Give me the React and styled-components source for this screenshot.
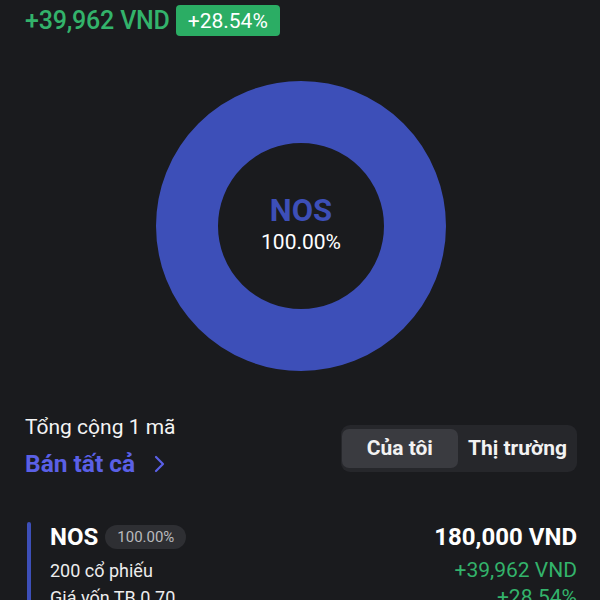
import React from "react";
import styled, { createGlobalStyle } from "styled-components";

const Global = createGlobalStyle`
  html, body { margin: 0; padding: 0; background: #1a1b1e; }
  body { font-family: Roboto, "Noto Sans", Arial, sans-serif; color: #f2f2f2; }
  * { box-sizing: border-box; }
`;

const Page = styled.div`
  width: 600px;
  height: 600px;
  overflow: hidden;
  background: #1a1b1e;
  padding: 5px 23px 0 27px;
  display: flex;
  flex-direction: column;
`;

const Header = styled.div`
  display: flex;
  align-items: center;
  gap: 6px;
  height: 31px;
  margin-left: -2px;
`;

const Gain = styled.span`
  font-size: 25px;
  font-weight: 500;
  color: #33b36b;
  letter-spacing: -0.2px;
`;

const GainBadge = styled.span`
  background: #2bad64;
  color: #fff;
  font-size: 21px;
  height: 31px;
  padding: 0 12px;
  border-radius: 4px;
  display: flex;
  align-items: center;
`;

const DonutWrap = styled.div`
  margin: 44px auto 0;
  width: 292px;
  height: 292px;
  display: grid;
  place-items: center;
  position: relative;
  left: -1px;
  & > * { grid-area: 1 / 1; }
`;

const Center = styled.div`
  display: flex;
  flex-direction: column;
  align-items: center;
`;

const CenterCode = styled.div`
  font-size: 31px;
  font-weight: 700;
  color: #3d4fb8;
  line-height: 32px;
`;

const CenterPct = styled.div`
  font-size: 21px;
  color: #fff;
  line-height: 30px;
`;

const Summary = styled.div`
  display: flex;
  justify-content: space-between;
  align-items: center;
  margin-top: 43px;
  margin-left: -2px;
`;

const SumLeft = styled.div`
  display: flex;
  flex-direction: column;
`;

const Total = styled.div`
  font-size: 21px;
  line-height: 24px;
  color: #f4f4f4;
`;

const SellAll = styled.div`
  margin-top: 12px;
  display: flex;
  align-items: center;
  gap: 18px;
  font-size: 24.5px;
  font-weight: 700;
  color: #5a60e6;
  line-height: 26px;
`;

const Segment = styled.div`
  display: flex;
  background: #26272b;
  border-radius: 9px;
  padding: 4px 0 4px 1px;
  height: 47px;
  margin-top: 4px;
`;

const SegBtn = styled.div`
  display: flex;
  align-items: center;
  justify-content: center;
  padding: 0 ${p => (p.$active ? "25px" : "10px")};
  font-size: 21px;
  font-weight: 700;
  color: #f2f2f2;
  border-radius: 7px;
  background: ${p => (p.$active ? "#3a3b40" : "transparent")};
`;

const Item = styled.div`
  margin-top: 45px;
  display: flex;
  gap: 19px;
`;

const Bar = styled.div`
  width: 4px;
  border-radius: 2px;
  background: #3d4fb8;
  height: 90px;
`;

const ItemBody = styled.div`
  flex: 1;
  display: flex;
  justify-content: space-between;
`;

const Col = styled.div`
  display: flex;
  flex-direction: column;
  align-items: ${p => (p.$right ? "flex-end" : "flex-start")};
`;

const CodeRow = styled.div`
  display: flex;
  align-items: center;
  gap: 7px;
  height: 30px;
  margin-bottom: 5px;
`;

const Code = styled.span`
  font-size: 24px;
  font-weight: 700;
  color: #fff;
`;

const PctBadge = styled.span`
  background: #2e2f33;
  color: #b9babd;
  font-size: 15px;
  height: 24px;
  padding: 0 12px;
  border-radius: 12px;
  display: flex;
  align-items: center;
`;

const Line = styled.div`
  font-size: ${p => p.$size || "18px"};
  line-height: ${p => p.$lh || "27px"};
  color: ${p => p.$color || "#ededed"};
  font-weight: ${p => p.$w || 400};
  white-space: nowrap;
`;

export default function App() {
  return (
    <>
      <Global />
      <Page>
        <Header>
          <Gain>+39,962 VND</Gain>
          <GainBadge>+28.54%</GainBadge>
        </Header>

        <DonutWrap>
          <svg width="292" height="292" viewBox="0 0 292 292">
            <circle cx="146" cy="146" r="114" fill="none" stroke="#3d4fb8" strokeWidth="62" />
          </svg>
          <Center>
            <CenterCode>NOS</CenterCode>
            <CenterPct>100.00%</CenterPct>
          </Center>
        </DonutWrap>

        <Summary>
          <SumLeft>
            <Total>Tổng cộng 1 mã</Total>
            <SellAll>
              Bán tất cả
              <svg width="12" height="18" viewBox="0 0 12 18">
                <path d="M3 2 L10 9 L3 16" fill="none" stroke="#5a60e6" strokeWidth="2.2" strokeLinecap="round" strokeLinejoin="round" />
              </svg>
            </SellAll>
          </SumLeft>
          <Segment>
            <SegBtn $active>Của tôi</SegBtn>
            <SegBtn>Thị trường</SegBtn>
          </Segment>
        </Summary>

        <Item>
          <Bar />
          <ItemBody>
            <Col>
              <CodeRow>
                <Code>NOS</Code>
                <PctBadge>100.00%</PctBadge>
              </CodeRow>
              <Line>200 cổ phiếu</Line>
              <Line>Giá vốn TB 0.70</Line>
            </Col>
            <Col $right>
              <CodeRow>
                <Line $size="24px" $lh="30px" $w={700} $color="#fff">180,000 VND</Line>
              </CodeRow>
              <Line $size="21px" $lh="27px" $color="#33b36b">+39,962 VND</Line>
              <Line $size="21px" $lh="27px" $color="#33b36b">+28.54%</Line>
            </Col>
          </ItemBody>
        </Item>
      </Page>
    </>
  );
}
